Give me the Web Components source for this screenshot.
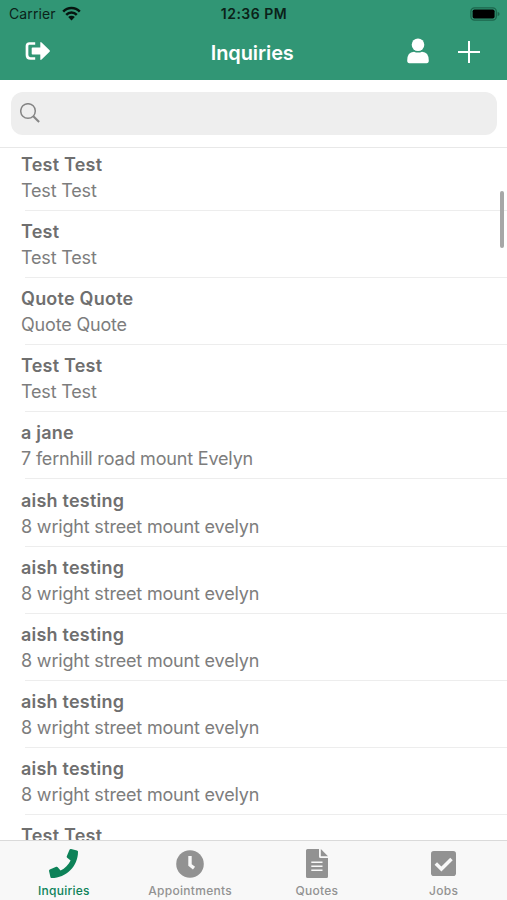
<!DOCTYPE html>
<html lang="en">
<head>
<meta charset="utf-8">
<title>Inquiries</title>
<style>
html,body{margin:0;padding:0;height:100%;background:#fff}
body{font-family:Inter,"Liberation Sans",sans-serif;overflow:hidden}
</style>
</head>
<body>
<inquiries-app></inquiries-app>
<script>
function define(name, html, setup) {
  const template = document.createElement('template');
  template.innerHTML = html;
  customElements.define(name, class extends HTMLElement {
    constructor() {
      super();
      this.attachShadow({ mode: 'open' }).append(template.content.cloneNode(true));
    }
    connectedCallback() { if (setup) setup(this, this.shadowRoot); }
  });
}

define('status-bar', `
<style>
:host{display:grid;grid-template-columns:1fr auto 1fr;align-items:center;height:27px;padding:0 7px 0 9px;box-sizing:border-box;color:#0b2219;font-size:14px}
.left{display:flex;align-items:center;gap:6px}
.carrier{letter-spacing:.12px}
.time{font-weight:600;font-size:14px;letter-spacing:.5px;margin-right:1px}
.right{display:flex;justify-content:flex-end}
svg{display:block}
</style>
<div class="left"><span class="carrier">Carrier</span>
<svg width="19" height="15" viewBox="0 0 19 15"><g fill="none" stroke="#06150f" stroke-width="2.5"><path d="M1.2 5.6a11.6 11.6 0 0 1 16.6 0"/><path d="M4.2 8.8a7.5 7.5 0 0 1 10.6 0"/></g><path d="M6.2 11.1a4.7 4.7 0 0 1 6.6 0L9.5 14.5z" fill="#06150f"/></svg></div>
<span class="time">12:36 PM</span>
<div class="right"><svg width="30" height="14" viewBox="0 0 30 14"><rect x=".9" y=".8" width="25.4" height="12.4" rx="3.6" fill="none" stroke="#1c664c" stroke-width="1.3"/><rect x="2.6" y="2.5" width="22" height="9" rx="1.8" fill="#000"/><path d="M27.6 4.8q2 .7 2 2.2t-2 2.2z" fill="#1c664c"/></svg></div>`);

define('nav-bar', `
<style>
:host{display:grid;grid-template-columns:1fr auto 1fr;align-items:center;height:52px;padding:0 27px 0 24.5px;box-sizing:border-box;color:#fff}
.title{font-size:20px;font-weight:600;letter-spacing:-.1px;line-height:24px}
.actions{display:flex;justify-content:flex-end;align-items:center;gap:29px;padding-bottom:2px}
svg{display:block}
.exit{margin-bottom:3px}
.person{margin-bottom:2px}
</style>
<svg class="exit" width="26" height="22" viewBox="0 0 26 22"><path d="M10.2 2.5H4.5Q2 2.5 2 5v9q0 3.5 3.5 3.5h4.7" fill="none" stroke="#fff" stroke-width="2.7"/><path d="M7.5 6.4h7.8V2q0-1.6 1.3-.5l8 7.8q.7.7 0 1.4l-8 7.8q-1.3 1.1-1.3-.5v-4.4H7.5q-.8 0-.8-.8V7.2q0-.8.8-.8z" fill="#fff"/></svg>
<span class="title"><slot></slot></span>
<div class="actions">
<svg class="person" width="22" height="26" viewBox="0 0 22 26"><circle cx="11" cy="6.8" r="6.3" fill="#fff"/><path d="M.2 22.5Q.2 14 7 13.7q4 1.7 8 0 6.8.3 6.8 8.8 0 2.7-2.2 2.7H2.4Q.2 25.2.2 22.5z" fill="#fff"/></svg>
<svg width="22" height="22" viewBox="0 0 22 22"><path d="M0 11h22M11 0v22" stroke="#fff" stroke-width="2"/></svg>
</div>`);

define('search-field', `
<style>
:host{display:block;height:68.5px;padding:12px 10px 13px 11px;box-sizing:border-box;border-bottom:1px solid #e8e8e8;background:#fff}
.box{height:43.5px;border-radius:12px;background:#eee;display:flex;align-items:center;padding-left:9px;box-sizing:border-box}
</style>
<div class="box"><svg width="20" height="20" viewBox="0 0 20 20" fill="none" stroke="#858585"><circle cx="8" cy="8" r="7.3" stroke-width="1.5"/><path d="M13.3 13.3l5.8 5.8" stroke-width="2.1"/></svg></div>`);

define('inquiry-row', `
<style>
:host{display:flex;flex-direction:column;height:67.2px;box-sizing:border-box;padding:8px 0 0 21px;position:relative;font-size:18px}
.name{font-weight:600;line-height:26px;height:26px;color:#6f6f6f;letter-spacing:.22px}
.address{line-height:26px;height:26px;color:#7d7d7d;letter-spacing:-.18px}
.line{margin:6px 0 0 4px;height:1px;background:#ededed}
</style>
<div class="name"><slot name="name"></slot></div>
<div class="address"><slot></slot></div>
<div class="line"></div>`);

define('scroll-thumb', `
<style>:host{display:block;position:absolute;right:3px;top:42.5px;width:4px;height:57px;border-radius:2px;background:#a7a7a7}</style>`);

define('inquiry-list', `
<style>
:host{display:block;position:relative;flex:1;min-height:0;overflow:hidden;background:#fff}
.rows{margin-top:-4.4px}
</style>
<div class="rows"><slot></slot></div><scroll-thumb></scroll-thumb>`);

const icons = {
  phone: '<svg width="29" height="29" viewBox="0 0 512 512"><path fill="currentColor" d="M493.4 24.6l-104-24c-11.3-2.6-22.9 3.3-27.5 13.9l-48 112c-4.2 9.8-1.4 21.3 6.9 28l60.6 49.6c-36 76.7-98.9 140.5-177.2 177.2l-49.6-60.6c-6.8-8.3-18.2-11.1-28-6.9l-112 48C3.9 366.5-2 378.1.6 389.4l24 104C27.1 504.2 36.7 512 48 512c256.1 0 464-207.5 464-464 0-11.2-7.7-20.9-18.6-23.4z"/></svg>',
  clock: '<svg width="28" height="28" viewBox="0 0 28 28"><circle cx="14" cy="14" r="13.8" fill="currentColor"/><path d="M14 6v9l4 3.2" fill="none" stroke="#f8f8f8" stroke-width="3.4"/></svg>',
  file: '<svg width="22" height="29" viewBox="0 0 22 29"><path d="M1.5 0H13v7.5q0 1.5 1.5 1.5H22v18.5q0 1.5-1.5 1.5h-19Q0 29 0 27.5v-26Q0 0 1.5 0z" fill="currentColor"/><path d="M14.8 0l7.2 7.2h-7.2z" fill="currentColor"/><path d="M5.3 13.2h11.2M5.3 17.2h11.2M5.3 21.2h11.2" stroke="#f8f8f8" stroke-width="1.6"/></svg>',
  check: '<svg width="25" height="25" viewBox="0 0 25 25"><rect width="25" height="25" rx="2.8" fill="currentColor"/><path d="M4.8 12.6l5.6 5.5L20.5 8" fill="none" stroke="#f8f8f8" stroke-width="3.5"/></svg>'
};

define('tab-item', `
<style>
:host{display:flex;flex-direction:column;align-items:center;flex:1;color:#929292;font-size:12px;font-weight:500}
:host([active]){color:#0d8258}
.icon{height:29px;margin-top:8px;display:flex;align-items:center}
.icon svg{display:block}
.label{line-height:16px;margin-top:5px;letter-spacing:.3px}
:host([active]) .label{letter-spacing:.25px;padding-left:1px}
:host([active]) .icon{padding-left:1px}
</style>
<div class="icon"></div><div class="label"><slot></slot></div>`, (el, root) => {
  root.querySelector('.icon').innerHTML = icons[el.getAttribute('icon')];
});

define('tab-bar', `
<style>:host{display:flex;height:60px;box-sizing:border-box;border-top:1px solid #dadada;background:#f8f8f8}</style><slot></slot>`);

define('inquiries-app', `
<style>
:host{display:flex;flex-direction:column;width:507px;height:900px;overflow:hidden}
header{background:#319675;padding-bottom:.5px}
</style>
<header><status-bar></status-bar><nav-bar>Inquiries</nav-bar></header>
<search-field></search-field>
<inquiry-list></inquiry-list>
<tab-bar>
<tab-item icon="phone" active>Inquiries</tab-item>
<tab-item icon="clock">Appointments</tab-item>
<tab-item icon="file">Quotes</tab-item>
<tab-item icon="check">Jobs</tab-item>
</tab-bar>`, (el, root) => {
  const wright = ['aish testing', '8 wright street mount evelyn'];
  const rows = [['Test Test', 'Test Test'], ['Test', 'Test Test'], ['Quote Quote', 'Quote Quote'],
    ['Test Test', 'Test Test'], ['a jane', '7 fernhill road mount Evelyn'],
    wright, wright, wright, wright, wright, ['Test Test', '']];
  const list = root.querySelector('inquiry-list');
  for (const [name, address] of rows) {
    const row = document.createElement('inquiry-row');
    const title = document.createElement('span');
    title.slot = 'name';
    title.textContent = name;
    row.append(title, address);
    list.append(row);
  }
});
</script>
</body>
</html>
